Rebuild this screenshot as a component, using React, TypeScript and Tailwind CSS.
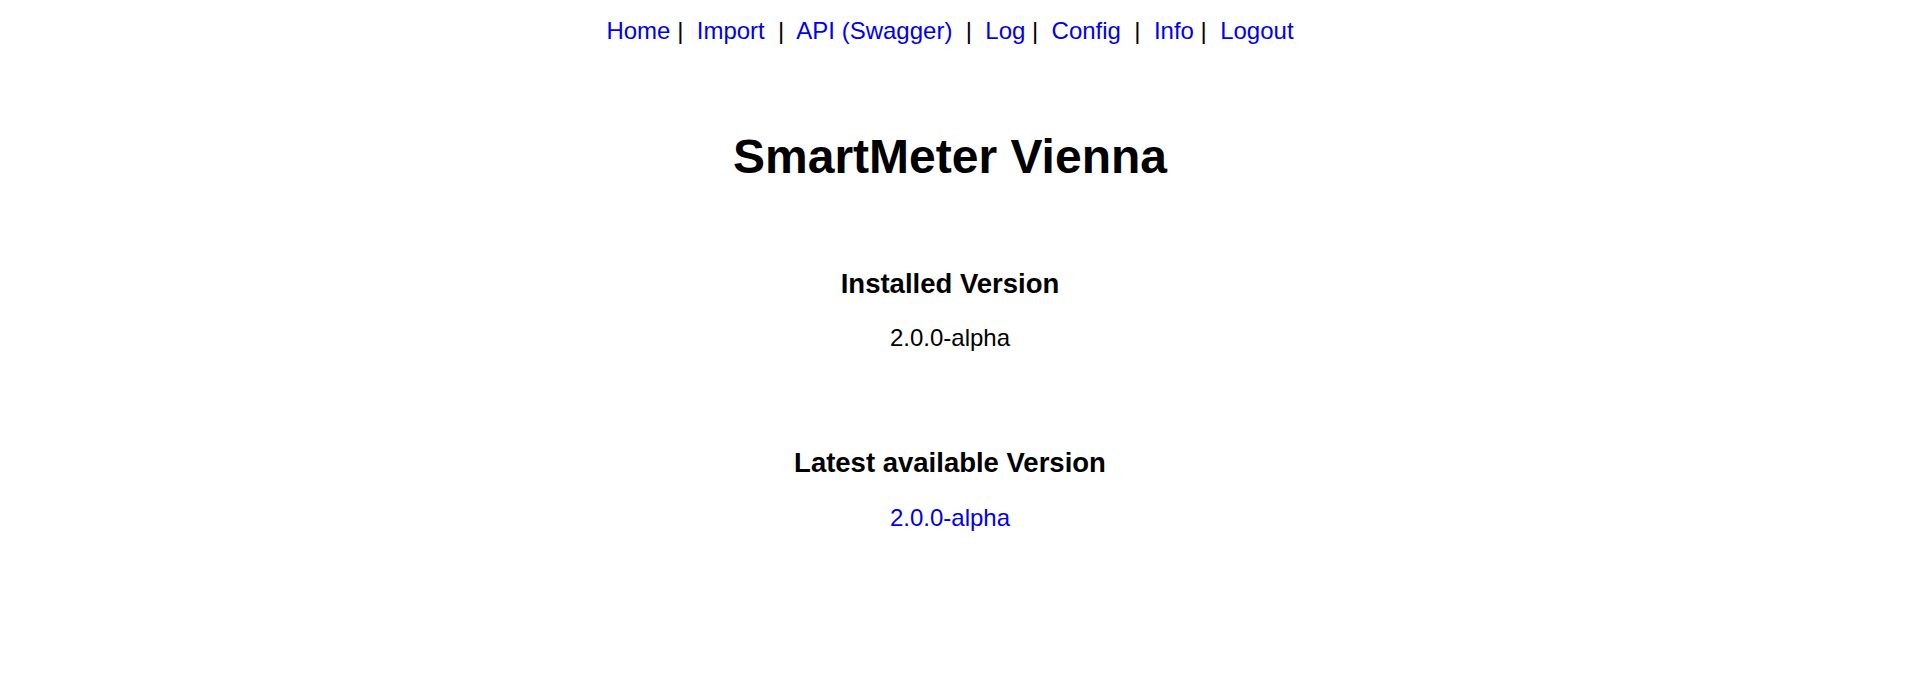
export default function App() {
  const link = 'text-[#0000EE]';

  return (
    <div className="min-h-[682px] bg-white text-black font-['Liberation_Sans',Arial,sans-serif]">
      <div className="flex flex-col items-center text-center pr-[15px]">
        {/* top navigation */}
        <nav className="pt-[17px] text-[24px] leading-[28px] whitespace-pre">
          <a href="#" className={link}>Home</a>
          {' |  '}
          <a href="#" className={link}>Import</a>
          {'  |  '}
          <a href="#" className={link}>API (Swagger)</a>
          {'  |  '}
          <a href="#" className={link}>Log</a>
          {' |  '}
          <a href="#" className={link}>Config</a>
          {'  |  '}
          <a href="#" className={link}>Info</a>
          {' |  '}
          <a href="#" className={link}>Logout</a>
        </nav>

        <h1 className="mt-[84px] text-[48px] leading-[55px] font-bold">SmartMeter Vienna</h1>

        <h3 className="mt-[84px] text-[27.5px] leading-[32px] font-bold">Installed Version</h3>
        <p className="mt-[24px] text-[24px] leading-[28px]">2.0.0-alpha</p>

        <h3 className="mt-[95px] text-[27.5px] leading-[32px] font-bold">Latest available Version</h3>
        <p className="mt-[25px] text-[24px] leading-[28px]">
          <a href="#" className={link}>2.0.0-alpha</a>
        </p>
      </div>
    </div>
  );
}
